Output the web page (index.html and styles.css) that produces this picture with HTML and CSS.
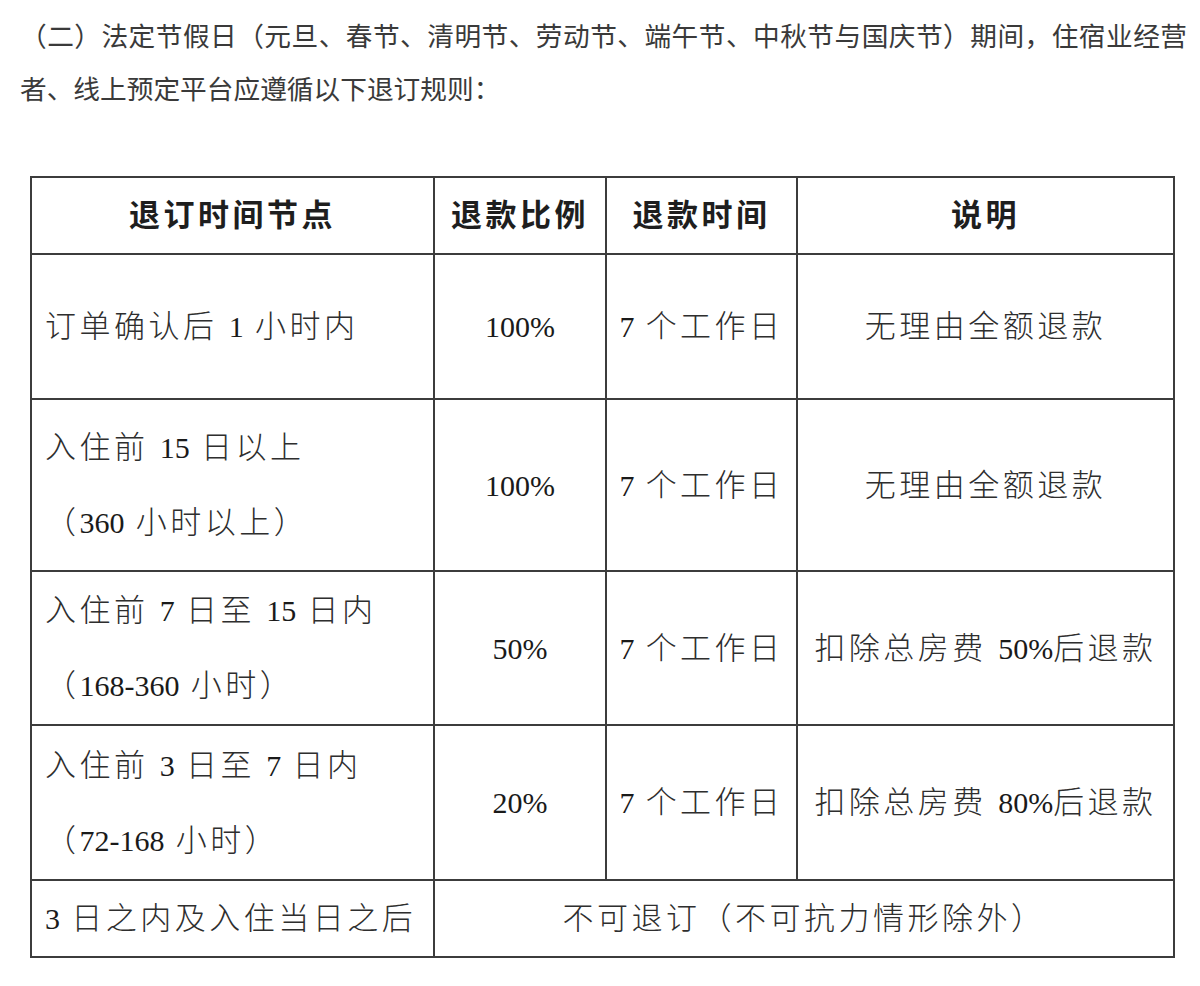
FILE: index.html
```html
<!DOCTYPE html>
<html lang="zh-CN">
<head>
<meta charset="utf-8">
<title>退订规则</title>
<link rel="stylesheet" href="styles.css">
</head>
<body>
<p class="intro">（二）法定节假日（元旦、春节、清明节、劳动节、端午节、中秋节与国庆节）期间，住宿业经营者、线上预定平台应遵循以下退订规则：</p>
<table class="rules">
  <colgroup>
    <col class="c1"><col class="c2"><col class="c3"><col class="c4">
  </colgroup>
  <thead>
    <tr class="r-head">
      <th>退订时间节点</th>
      <th>退款比例</th>
      <th>退款时间</th>
      <th>说明</th>
    </tr>
  </thead>
  <tbody>
    <tr class="r1">
      <td class="node">订单确认后 <span class="n">1</span> 小时内</td>
      <td><span class="n">100%</span></td>
      <td><span class="n">7</span> 个工作日</td>
      <td>无理由全额退款</td>
    </tr>
    <tr class="r2">
      <td class="node">入住前 <span class="n">15</span> 日以上<br>（<span class="n">360</span> 小时以上）</td>
      <td><span class="n">100%</span></td>
      <td><span class="n">7</span> 个工作日</td>
      <td>无理由全额退款</td>
    </tr>
    <tr class="r3">
      <td class="node">入住前 <span class="n">7</span> 日至 <span class="n">15</span> 日内<br>（<span class="n">168-360</span> 小时）</td>
      <td><span class="n">50%</span></td>
      <td><span class="n">7</span> 个工作日</td>
      <td>扣除总房费 <span class="n">50%</span>后退款</td>
    </tr>
    <tr class="r4">
      <td class="node">入住前 <span class="n">3</span> 日至 <span class="n">7</span> 日内<br>（<span class="n">72-168</span> 小时）</td>
      <td><span class="n">20%</span></td>
      <td><span class="n">7</span> 个工作日</td>
      <td>扣除总房费 <span class="n">80%</span>后退款</td>
    </tr>
    <tr class="r5">
      <td class="node"><span class="n">3</span> 日之内及入住当日之后</td>
      <td colspan="3">不可退订（不可抗力情形除外）</td>
    </tr>
  </tbody>
</table>
</body>
</html>
```

FILE: styles.css
```css
html, body {
  margin: 0;
  padding: 0;
  background: #ffffff;
}

.intro {
  margin: 0;
  padding: 8px 13px 0 20px;
  font-family: "Noto Sans CJK SC", "Noto Sans", sans-serif;
  font-size: 26.7px;
  line-height: 53px;
  color: #3a3a3a;
  text-align: justify;
}

.rules {
  margin: 62px 0 0 30px;
  width: 1145px;
  table-layout: fixed;
  border-collapse: collapse;
  font-family: "Liberation Serif", "Noto Sans CJK SC", serif;
  font-size: 31px;
  font-weight: 300;
  letter-spacing: 3.5px;
  color: #2e2e2e;
}

.c1 { width: 403px; }
.c2 { width: 172px; }
.c3 { width: 191px; }
.c4 { width: 377px; }

.rules th,
.rules td {
  border: 2px solid #3c3c3c;
  padding: 0;
  text-align: center;
  vertical-align: middle;
  line-height: 75px;
}

.rules th {
  font-weight: 700;
  color: #1e1e1e;
}

.rules td.node {
  text-align: left;
  padding-left: 13px;
}

.n {
  font-size: 30px;
  letter-spacing: 0;
  font-weight: 400;
  color: #1a1a1a;
}

.r-head { height: 77px; }
.r1 { height: 145px; }
.r2 { height: 172px; }
.r3 { height: 154px; }
.r4 { height: 155px; }
.r5 { height: 77px; }
```
